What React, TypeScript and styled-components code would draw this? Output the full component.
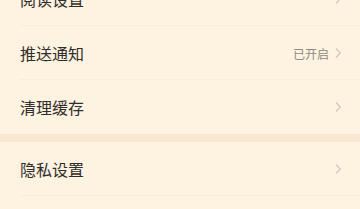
import React from "react";
import styled, { createGlobalStyle } from "styled-components";

const Global = createGlobalStyle`
  html, body { margin: 0; padding: 0; background: #fef2e0; overflow: hidden; }
  body { font-family: "Noto Sans CJK SC", "Noto Sans", sans-serif; }
`;

const Page = styled.div`
  width: 360px;
  height: 209px;
  overflow: hidden;
  background: #fef2e0;
`;

const Scroll = styled.div`
  margin-top: -28px;
  display: flex;
  flex-direction: column;
`;

const Group = styled.div`
  display: flex;
  flex-direction: column;
`;

const Gap = styled.div`
  height: 8px;
  background: #f6e8d3;
`;

const Row = styled.div<{ $divider?: boolean }>`
  height: 54px;
  display: flex;
  align-items: center;
  padding: 0 18px 0 20px;
  box-sizing: border-box;
  position: relative;
  &::after {
    content: "";
    display: ${(p) => (p.$divider ? "block" : "none")};
    position: absolute;
    left: 20px;
    right: 0;
    bottom: 0;
    height: 1px;
    background: #f9ecd9;
  }
`;

const Label = styled.span`
  flex: 1;
  font-size: 16px;
  font-weight: 400;
  color: #2f2e2c;
  line-height: 1;
`;

const Value = styled.span`
  font-size: 12px;
  color: #8f8b85;
  margin-right: 5px;
`;

const Chevron = () => (
  <svg width="8" height="12" viewBox="0 0 8 12" style={{ display: "block" }}>
    <path d="M2 1.5 L6.2 6 L2 10.5" fill="none" stroke="#cdc8c0" strokeWidth="1.2" />
  </svg>
);

const items1 = [
  { label: "阅读设置" },
  { label: "推送通知", value: "已开启" },
  { label: "清理缓存" },
];

export default function App() {
  return (
    <Page>
      <Global />
      <Scroll>
        <Group>
          {items1.map((it, i) => (
            <Row key={it.label} $divider={i < items1.length - 1}>
              <Label>{it.label}</Label>
              {it.value && <Value>{it.value}</Value>}
              <Chevron />
            </Row>
          ))}
        </Group>
        <Gap />
        <Group>
          <Row $divider>
            <Label>隐私设置</Label>
            <Chevron />
          </Row>
        </Group>
      </Scroll>
    </Page>
  );
}
